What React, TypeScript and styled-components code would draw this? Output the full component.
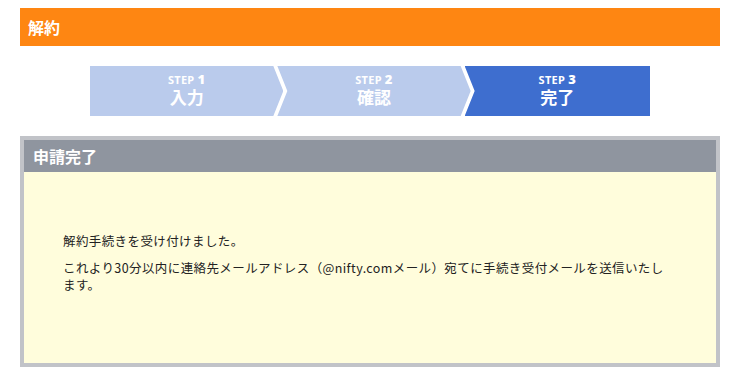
import React from "react";
import styled, { createGlobalStyle } from "styled-components";

const Global = createGlobalStyle`
  html, body { margin: 0; padding: 0; background: #ffffff; }
  body { font-family: "Noto Sans CJK JP", "Noto Sans", sans-serif; }
`;

const Page = styled.div`
  width: 700px;
  margin: 8px 0 0 20px;
  display: flex;
  flex-direction: column;
`;

const TitleBar = styled.h1`
  margin: 0;
  height: 38px;
  background: #fe8612;
  color: #ffffff;
  font-size: 16px;
  font-weight: 700;
  line-height: 38px;
  padding-left: 8px;
`;

const Steps = styled.ol`
  list-style: none;
  margin: 20px auto 0;
  padding: 0;
  width: 560px;
  height: 50px;
  display: flex;
`;

type Pos = "first" | "mid" | "last";

const clips: Record<Pos, string> = {
  first: "polygon(0 0, calc(100% - 10px) 0, 100% 50%, calc(100% - 10px) 100%, 0 100%)",
  mid: "polygon(0 0, calc(100% - 10px) 0, 100% 50%, calc(100% - 10px) 100%, 0 100%, 10px 50%)",
  last: "polygon(0 0, 100% 0, 100% 100%, 0 100%, 10px 50%)",
};

const Step = styled.li<{ $pos: Pos; $active?: boolean }>`
  flex: 1;
  margin-left: ${(p) => (p.$pos === "first" ? "0" : "-6px")};
  background: ${(p) => (p.$active ? "#3e6ecf" : "#bacbec")};
  clip-path: ${(p) => clips[p.$pos]};
  color: #ffffff;
  display: flex;
  flex-direction: column;
  align-items: center;
  justify-content: center;
  padding-left: ${(p) => (p.$pos === "last" ? "0" : "4px")};
  padding-right: ${(p) => (p.$pos === "last" ? "0" : "4px")};
`;

const StepNo = styled.span`
  display: block;
  font-family: "Noto Sans", "Open Sans", sans-serif;
  font-weight: 700;
  font-size: 11px;
  line-height: 12px;
  height: 12px;
  letter-spacing: 0.3px;
  b {
    font-size: 13px;
    line-height: 12px;
    margin-left: 3px;
  }
`;

const StepLabel = styled.span`
  display: block;
  font-weight: 700;
  font-size: 17px;
  line-height: 24px;
`;

const Panel = styled.section`
  margin-top: 20px;
  border: 4px solid #c1c3c8;
  display: flex;
  flex-direction: column;
`;

const PanelHead = styled.h2`
  margin: 0;
  height: 32px;
  background: #8f959f;
  color: #ffffff;
  font-size: 16px;
  font-weight: 700;
  line-height: 32px;
  padding-left: 9px;
`;

const PanelBody = styled.div`
  background: #fffddc;
  padding: 60px 40px 0 39px;
  height: 191px;
  box-sizing: border-box;
  color: #222222;
  font-size: 12.5px;
  line-height: 17px;
  letter-spacing: 0.4px;
`;

const Para = styled.p`
  margin: 0 0 10px;
`;

export default function App() {
  return (
    <>
      <Global />
      <Page>
        <TitleBar>解約</TitleBar>
        <Steps>
          <Step $pos="first">
            <StepNo>STEP<b>1</b></StepNo>
            <StepLabel>入力</StepLabel>
          </Step>
          <Step $pos="mid">
            <StepNo>STEP<b>2</b></StepNo>
            <StepLabel>確認</StepLabel>
          </Step>
          <Step $pos="last" $active>
            <StepNo>STEP<b>3</b></StepNo>
            <StepLabel>完了</StepLabel>
          </Step>
        </Steps>
        <Panel>
          <PanelHead>申請完了</PanelHead>
          <PanelBody>
            <Para>解約手続きを受け付けました。</Para>
            <Para>
              これより30分以内に連絡先メールアドレス（@nifty.comメール）宛てに手続き受付メールを送信いたします。
            </Para>
          </PanelBody>
        </Panel>
      </Page>
    </>
  );
}
